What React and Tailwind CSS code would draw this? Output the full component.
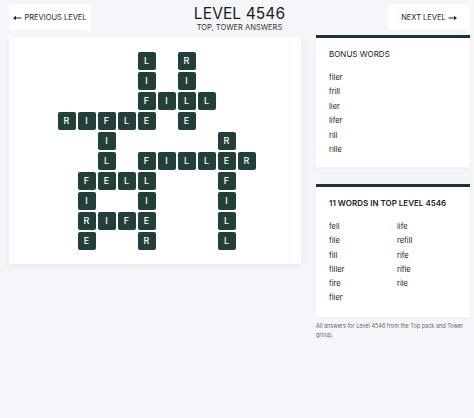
import React from "react";

const COLS = ["col-start-1", "col-start-2", "col-start-3", "col-start-4", "col-start-5", "col-start-6", "col-start-7", "col-start-8", "col-start-9", "col-start-10"];
const ROWS = ["row-start-1", "row-start-2", "row-start-3", "row-start-4", "row-start-5", "row-start-6", "row-start-7", "row-start-8", "row-start-9", "row-start-10"];

// [row, col, letter]
const tiles = [
  [0, 4, "L"], [0, 6, "R"],
  [1, 4, "I"], [1, 6, "I"],
  [2, 4, "F"], [2, 5, "I"], [2, 6, "L"], [2, 7, "L"],
  [3, 0, "R"], [3, 1, "I"], [3, 2, "F"], [3, 3, "L"], [3, 4, "E"], [3, 6, "E"],
  [4, 2, "I"], [4, 8, "R"],
  [5, 2, "L"], [5, 4, "F"], [5, 5, "I"], [5, 6, "L"], [5, 7, "L"], [5, 8, "E"], [5, 9, "R"],
  [6, 1, "F"], [6, 2, "E"], [6, 3, "L"], [6, 4, "L"], [6, 8, "F"],
  [7, 1, "I"], [7, 4, "I"], [7, 8, "I"],
  [8, 1, "R"], [8, 2, "I"], [8, 3, "F"], [8, 4, "E"], [8, 8, "L"],
  [9, 1, "E"], [9, 4, "R"], [9, 8, "L"],
];

const bonus = ["filer", "frill", "lier", "lifer", "rill", "rille"];
const wordsA = ["fell", "file", "fill", "filler", "fire", "flier"];
const wordsB = ["life", "refill", "rife", "rifle", "rile"];

function Arrow({ left }) {
  return (
    <svg width="9" height="6" viewBox="0 0 9 6" className={left ? "" : "rotate-180"}>
      <path d="M0.5 3H8.5" stroke="#222" strokeWidth="1" />
      <path d="M0.3 3L3 0.8V5.2Z" fill="#222" />
    </svg>
  );
}

function App() {
  return (
    <div className="min-h-[418px] w-[474px] bg-[#f5f6fa] font-['Inter',sans-serif] text-[#222]">
      <div className="flex items-start justify-between pl-[9px] pr-[4px] pt-[5px] h-[35px]">
        <button className="bg-white w-[82px] h-[25px] flex items-center justify-center gap-[2px] text-[7.5px] text-[#222]">
          <Arrow left />PREVIOUS LEVEL
        </button>
        <div className="flex flex-col items-center">
          <h1 className="text-[15.5px] leading-[17px] font-normal tracking-[0.1px] text-[#1a1a1a]">LEVEL 4546</h1>
          <p className="text-[7.5px] leading-[9px] mt-[1px] text-[#333]">TOP, TOWER ANSWERS</p>
        </div>
        <button className="bg-white w-[82px] h-[25px] flex items-center justify-center gap-[2px] text-[7.5px] text-[#222]">
          NEXT LEVEL<Arrow />
        </button>
      </div>

      <div className="flex gap-[15px] pl-[9px] pr-[4px]">
        <div className="mt-[2px] w-[292px] h-[227px] bg-white shadow-[0_2px_6px_rgba(0,0,0,0.06)] flex items-center justify-center pl-[3px] pt-[1px]">
          <div className="grid grid-cols-[repeat(10,18px)] grid-rows-[repeat(10,18px)] gap-[2px]">
            {tiles.map(([r, c, l], i) => (
              <div
                key={i}
                className={`${ROWS[r]} ${COLS[c]} bg-[#233f39] rounded-[2px] text-white text-[9px] font-medium flex items-center justify-center`}
              >
                {l}
              </div>
            ))}
          </div>
        </div>

        <div className="w-[154px] flex flex-col">
          <div className="bg-white border-t-[3px] border-[#1f3430] h-[132px] px-[13px] pt-[11px] shadow-[0_1px_4px_rgba(0,0,0,0.04)]">
            <h2 className="text-[8px] leading-[10px] text-[#222]">BONUS WORDS</h2>
            <ul className="mt-[12px] flex flex-col">
              {bonus.map((w) => (
                <li key={w} className="text-[7.5px] leading-[14.4px]">{w}</li>
              ))}
            </ul>
          </div>

          <div className="mt-[17px] bg-white border-t-[3px] border-[#1f3430] h-[133px] px-[13px] pt-[11px] shadow-[0_1px_4px_rgba(0,0,0,0.04)]">
            <h2 className="text-[8px] leading-[10px] font-semibold text-[#222]">11 WORDS IN TOP LEVEL 4546</h2>
            <div className="mt-[12px] grid grid-cols-[68px_1fr]">
              <ul className="flex flex-col">
                {wordsA.map((w) => (
                  <li key={w} className="text-[7.5px] leading-[14.3px]">{w}</li>
                ))}
              </ul>
              <ul className="flex flex-col">
                {wordsB.map((w) => (
                  <li key={w} className="text-[7.5px] leading-[14.3px]">{w}</li>
                ))}
              </ul>
            </div>
          </div>

          <p className="mt-[5px] -mr-[4px] text-[5.5px] leading-[9px] text-[#666]">
            All answers for Level 4546 from the Top pack and Tower group.
          </p>
        </div>
      </div>
    </div>
  );
}

export default App;
